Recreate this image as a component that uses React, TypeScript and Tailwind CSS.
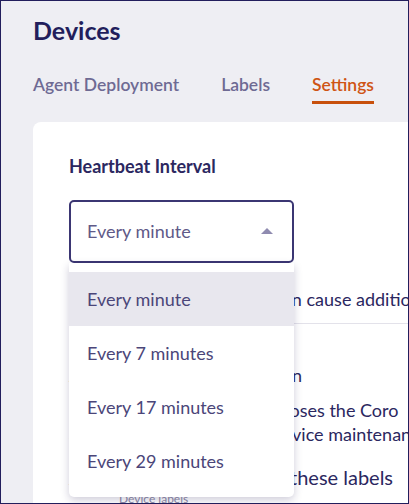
import { useState } from 'react';

const options = ['Every minute', 'Every 7 minutes', 'Every 17 minutes', 'Every 29 minutes'];

function IntervalSelect() {
  const [value] = useState(options[0]);

  return (
    <div className="relative w-[225px]">
      <div className="flex h-[63px] items-center justify-between rounded-[5px] border-2 border-[#3b3673] bg-white pl-[16px] pr-[19px]">
        <span className="text-[18px] text-[#5f5a88]">{value}</span>
        <svg width="12" height="6" viewBox="0 0 12 6" className="mt-[-2px]">
          <path d="M0 6 L6 0 L12 6 Z" fill="#8f8bb0" />
        </svg>
      </div>

      {/* open menu */}
      <ul className="absolute left-0 top-full z-10 w-[225px] rounded-b-[5px] bg-white py-[9px] shadow-[0_3px_8px_rgba(30,25,80,0.22)]">
        {options.map((opt, i) => (
          <li
            key={opt}
            className={
              'flex h-[54px] items-center pl-[18px] text-[18px] text-[#4b4679] ' +
              (i === 0 ? 'bg-[#e8e7ee]' : '')
            }
          >
            {opt}
          </li>
        ))}
      </ul>
    </div>
  );
}

export default function App() {
  return (
    <div
      className="h-[504px] w-[409px] overflow-hidden border border-[#221e5c] bg-[#eeeef3] pl-[32px]"
      style={{ fontFamily: 'Lato, "Noto Sans", sans-serif' }}
    >
      <h1 className="mt-[11px] text-[25px] font-bold leading-[36px] text-[#221e5c]">Devices</h1>

      <nav className="mt-[26px] flex gap-[42px] text-[17.5px] font-semibold leading-[22px]">
        <span className="pb-[8px] text-[#6e6a93]">Agent Deployment</span>
        <span className="pb-[8px] text-[#6e6a93]">Labels</span>
        <span className="border-b-[3px] border-[#c8500c] pb-[5px] text-[#cf5414]">Settings</span>
      </nav>

      <section className="mt-[18px] h-[400px] w-[420px] rounded-tl-[8px] bg-white pl-[36px] pt-[32px] text-[#2b2760]">
        <h2 className="text-[18px] font-bold leading-[24px]">Heartbeat Interval</h2>

        <div className="mt-[22px]">
          <IntervalSelect />
        </div>

        <p className="mt-[24px] whitespace-nowrap text-[18px] leading-[24px]">
          Lower heartbeat intervals can cause additional load
        </p>

        <div className="mt-[12px] h-px w-full bg-[#e3e2ea]" />

        <div className="mt-[39px] whitespace-nowrap text-[18px] leading-[24px]">
          <p>Automatic label configuration</p>
          <p className="mt-[11px]">For internal operations purposes the Coro</p>
          <p>agent tags each managed device maintenance</p>
        </div>

        <p className="mt-[17px] whitespace-nowrap text-[20px] leading-[28px]">
          Automatically assign just these labels
        </p>
        <p className="pl-[50px] text-[12px] leading-[16px] text-[#8d8aa6]">Device labels</p>
      </section>
    </div>
  );
}
